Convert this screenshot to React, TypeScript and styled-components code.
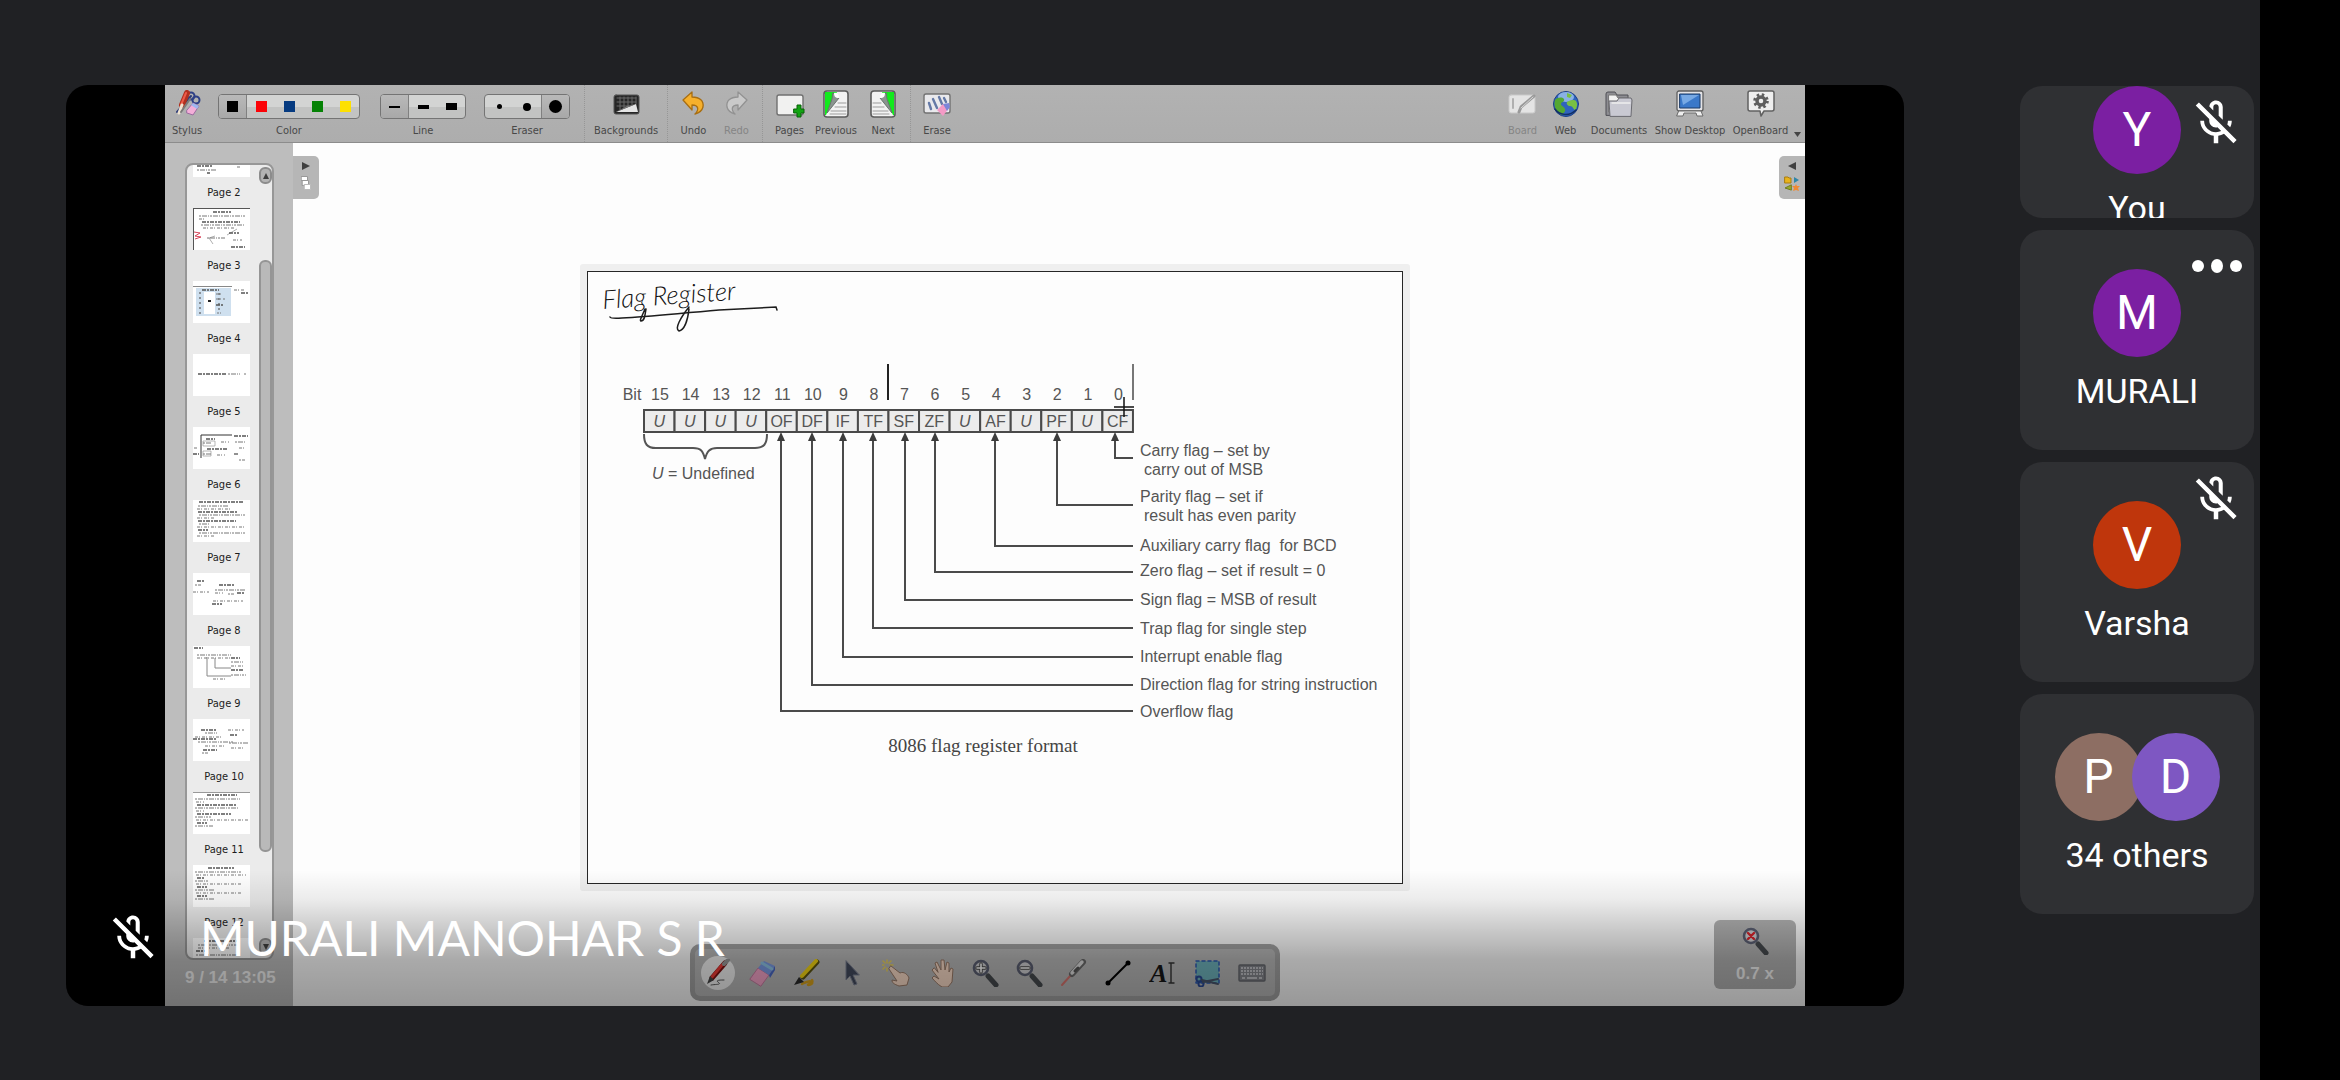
import React from "react";
import styled, { createGlobalStyle, css } from "styled-components";

const GlobalStyle = createGlobalStyle`
  * { box-sizing: border-box; }
  body { margin: 0; background: #202124; font-family: Roboto, "Liberation Sans", sans-serif; }
  button { margin: 0; padding: 0; border: 0; background: none; color: inherit; font: inherit; }
  svg { display: block; }
`;

/* ---------- call layout ---------- */

const Call = styled.div`
  display: flex;
  height: 100vh;
  min-height: 720px;
  background: #202124;
`;

const CallBody = styled.main`
  flex: 1;
  min-width: 0;
  display: flex;
  gap: 116px;
  padding: 85px 6px 74px 66px;
`;

const CutoutStrip = styled.div`
  width: 80px;
  background: #000;
`;

const Stage = styled.section`
  position: relative;
  flex: 1;
  min-width: 0;
  display: flex;
  padding: 0 99px;
  border-radius: 22px;
  background: #000;
  overflow: hidden;
`;

const Scrim = styled.div`
  position: absolute;
  inset: auto 0 0 0;
  height: 136px;
  background: linear-gradient(
    rgba(0, 0, 0, 0),
    rgba(0, 0, 0, 0.07) 22%,
    rgba(0, 0, 0, 0.21) 45%,
    rgba(0, 0, 0, 0.33) 66%,
    rgba(0, 0, 0, 0.4)
  );
  pointer-events: none;
`;

const Presenter = styled.div`
  position: absolute;
  left: 40px;
  bottom: 38px;
  display: flex;
  align-items: center;
  gap: 40px;
  color: #fff;
  font-family: Lato, Roboto, sans-serif;
  font-size: 48px;
  line-height: 60px;
  white-space: nowrap;
`;

/* ---------- participants ---------- */

const Participants = styled.ul`
  width: 234px;
  margin: 0;
  padding: 1px 0 0;
  list-style: none;
  display: flex;
  flex-direction: column;
  gap: 12px;
`;

const Tile = styled.li<{ $cut?: boolean }>`
  position: relative;
  display: flex;
  flex-direction: column;
  align-items: center;
  gap: 14px;
  flex: none;
  height: ${(p) => (p.$cut ? 132 : 220)}px;
  padding-top: ${(p) => (p.$cut ? 0 : 39)}px;
  border-radius: 22px;
  background: #2f3033;
  overflow: hidden;
`;

const Avatars = styled.div`
  display: flex;
`;

const Avatar = styled.div<{ $color: string }>`
  flex: none;
  display: flex;
  align-items: center;
  justify-content: center;
  width: 88px;
  height: 88px;
  border-radius: 50%;
  background: ${(p) => p.$color};
  color: #fff;
  font-size: 48px;
  line-height: 56px;
  & + & {
    margin-left: -11px;
  }
`;

const TileName = styled.span`
  flex: none;
  color: #fff;
  font-size: 34px;
  line-height: 40px;
`;

const TileAction = styled.button`
  position: absolute;
  top: 10px;
  right: 11px;
`;

/* ---------- shared board ---------- */

const Board = styled.div`
  position: relative;
  flex: 1;
  min-width: 0;
  display: flex;
  flex-direction: column;
  font-family: "DejaVu Sans Condensed", "DejaVu Sans", sans-serif;
  font-size: 11px;
  line-height: 14px;
  color: #484848;
`;

const Toolbar = styled.header`
  display: flex;
  height: 58px;
  padding: 4px 3px 0 0;
  background: linear-gradient(#b2b2b2, #adadad);
  border-bottom: 1px solid #8c8c8c;
`;

const Spacer = styled.div`
  flex: 1;
`;

const barItem = css`
  display: flex;
  flex-direction: column;
  align-items: center;
  gap: 5px;
  height: 49px;
  white-space: nowrap;
`;

const BarButton = styled.button<{ $w: number }>`
  ${barItem}
  width: ${(p) => p.$w}px;
  &:disabled {
    color: #858585;
  }
`;

const BarIcon = styled.span`
  display: flex;
  align-items: center;
  justify-content: center;
  height: 30px;
`;

const BarField = styled.div<{ $before: number }>`
  ${barItem}
  margin-left: ${(p) => p.$before}px;
  padding-top: 5px;
`;

const Segments = styled.div`
  display: flex;
  height: 25px;
  border: 1px solid #747474;
  border-radius: 4px;
  background: linear-gradient(#d3d4d3 50%, #c2c3c2 50%);
  overflow: hidden;
`;

const Segment = styled.button<{ $on?: boolean; $last?: boolean }>`
  display: flex;
  align-items: center;
  justify-content: center;
  width: 28px;
  ${(p) =>
    p.$on &&
    css`
      background: linear-gradient(#b9b9b9, #a8a8a8);
      border-${p.$last ? "left" : "right"}: 1px solid #808080;
    `}
`;

const Mark = styled.span<{ $w: number; $h: number; $color: string; $round?: boolean }>`
  width: ${(p) => p.$w}px;
  height: ${(p) => p.$h}px;
  background: ${(p) => p.$color};
  border-radius: ${(p) => (p.$round ? "50%" : "0")};
`;

const Divider = styled.span<{ $before?: number }>`
  margin: -4px 4px 0 ${(p) => p.$before ?? 4}px;
  border-left: 1px dotted #969696;
`;

const MenuCaret = styled.button`
  display: flex;
  align-items: flex-end;
  padding: 0 1px 5px 2px;
`;

const Workspace = styled.div`
  flex: 1;
  min-height: 0;
  display: flex;
`;

const PagePanel = styled.aside`
  display: flex;
  flex-direction: column;
  width: 128px;
  padding: 20px 19px 0 20px;
  background: #bdbdbd;
`;

const PageList = styled.div`
  flex: 1;
  min-height: 0;
  display: flex;
  border: 2px solid #979797;
  border-radius: 8px;
  background: #ebebeb;
  overflow: hidden;
`;

const PageItems = styled.ol`
  flex: 1;
  margin: 0;
  padding: 0 0 0 2px;
  list-style: none;
`;

const PageItem = styled.li`
  display: flex;
  flex-direction: column;
  align-items: center;
  color: #1c1c1c;
`;

const PageThumb = styled.button<{ $cut?: boolean }>`
  display: flex;
  align-items: flex-end;
  width: 57px;
  height: ${(p) => (p.$cut ? 12 : 42)}px;
  margin-right: 5px;
  background: #fff;
  overflow: hidden;
`;

const PageName = styled.span`
  padding: 9px 0 8px;
  line-height: 14px;
`;

const Scroller = styled.div`
  position: relative;
  display: flex;
  flex-direction: column;
  justify-content: space-between;
  width: 13px;
  padding: 2px 0 3px;
`;

const ScrollStep = styled.button`
  display: flex;
  align-items: center;
  justify-content: center;
  height: 17px;
  border: 2px solid #8c8c8c;
  border-radius: 6px;
  background: #b4b4b4;
`;

const ScrollThumb = styled.div`
  position: absolute;
  top: 12%;
  left: 0;
  right: 0;
  bottom: 13%;
  margin-bottom: 3px;
  border: 2px solid #959595;
  border-radius: 6px;
  background: #b9b9b9;
`;

const Status = styled.p`
  margin: 0;
  height: 46px;
  padding-top: 8px;
  color: #f4f4f4;
  text-align: center;
  font: bold 17px/20px "Liberation Sans", Arial, sans-serif;
  white-space: nowrap;
`;

const Canvas = styled.div`
  flex: 1;
  min-width: 0;
  display: flex;
  align-items: flex-start;
  justify-content: space-between;
  background: #fdfdfd;
`;

const DockTab = styled.button<{ $side: "left" | "right" }>`
  display: flex;
  flex-direction: column;
  align-items: center;
  gap: 6px;
  width: 26px;
  height: 43px;
  margin-top: 13px;
  padding-top: 6px;
  border-radius: ${(p) => (p.$side === "left" ? "0 5px 5px 0" : "5px 0 0 5px")};
  background: #b6b6b6;
`;

const Sheet = styled.div`
  margin: 121px 108px 0 0;
  border: 7px solid #efefef;
  border-radius: 3px;
`;

const SheetPage = styled.div`
  border: 1px solid #262626;
  background: #fdfdfd;
`;

const ToolPalette = styled.div`
  position: absolute;
  left: 50%;
  bottom: 5px;
  transform: translateX(-50%);
  display: grid;
  grid-template-columns: repeat(13, 1fr);
  width: 590px;
  height: 57px;
  padding: 0 1px;
  border: 5px solid #a3a3a3;
  border-radius: 10px;
  background: #b9b9b9;
`;

const Tool = styled.button`
  display: flex;
  align-items: center;
  justify-content: center;
`;

const ToolFace = styled.span<{ $on?: boolean }>`
  display: flex;
  align-items: center;
  justify-content: center;
  width: 34px;
  height: 34px;
  border-radius: 50%;
  background: ${(p) => (p.$on ? "#f2f2f2" : "transparent")};
`;

const ZoomBox = styled.button`
  position: absolute;
  right: 9px;
  bottom: 17px;
  display: flex;
  flex-direction: column;
  align-items: center;
  gap: 9px;
  width: 82px;
  height: 69px;
  padding-top: 7px;
  border-radius: 6px;
  background: #b2b2b2;
  color: #f4f4f4;
  font: bold 17px/20px "Liberation Sans", Arial, sans-serif;
`;

/* ---------- icons ---------- */

const MicOff = () => (
  <svg width="54" height="54" viewBox="0 0 24 24" fill="#fff" aria-hidden="true">
    <path d="M10.8 4.9c0-.66.54-1.2 1.2-1.2s1.2.54 1.2 1.2l-.01 3.91L15 10.6V5c0-1.66-1.34-3-3-3-1.54 0-2.79 1.16-2.96 2.65l1.76 1.76V4.9zM19 11h-1.7c0 .58-.1 1.13-.27 1.64l1.27 1.27c.44-.88.7-1.87.7-2.91zM4.41 2.86L3 4.27l6 6V11c0 1.66 1.34 3 3 3 .23 0 .44-.03.65-.08l1.66 1.66c-.71.33-1.5.52-2.31.52-2.76 0-5.3-2.1-5.3-5.1H5c0 3.41 2.72 6.23 6 6.72V21h2v-3.28c.91-.13 1.77-.45 2.55-.9l4.2 4.2 1.41-1.41L4.41 2.86z" />
  </svg>
);

const MoreDots = () => (
  <svg width="54" height="54" viewBox="0 0 54 54" fill="#fff" aria-hidden="true">
    <circle cx="9" cy="26" r="6" />
    <ellipse cx="28" cy="26" rx="6" ry="7" />
    <circle cx="47" cy="26" r="6" />
  </svg>
);

const Icon = ({ children, w = 28, h = 28 }: { children: React.ReactNode; w?: number; h?: number }) => (
  <svg width={w} height={h} viewBox={`0 0 ${w} ${h}`} fill="none" strokeLinecap="round" strokeLinejoin="round" aria-hidden="true">
    {children}
  </svg>
);

const StylusIcon = () => (
  <Icon>
    <path d="M4 22 18 6" stroke="#2b3a78" strokeWidth="2" />
    <circle cx="18" cy="6" r="3.5" stroke="#2d3f86" strokeWidth="2" />
    <circle cx="23" cy="10" r="3.5" stroke="#2d3f86" strokeWidth="2" />
    <path d="M9 15 14 3" stroke="#b03020" strokeWidth="6" />
    <path d="M8 15 13 3" stroke="#ee5a48" strokeWidth="2" />
    <path d="M6 23 9 15" stroke="#efe2d0" strokeWidth="3" />
    <path d="M8 22 17 9" stroke="#7b7b7b" strokeWidth="2" />
    <path d="m14 20 6-7 6 3-6 9-6-2z" fill="#f3aed8" stroke="#9a6ca0" />
    <path d="m18 15 2-2 6 3-2 3z" fill="#9db7f0" />
  </Icon>
);

const BackgroundsIcon = () => (
  <Icon>
    <rect x="2" y="5" width="25" height="19" rx="2" fill="#262626" stroke="#555" />
    <path d="M5 8h19M5 12h19M5 16h12M8 7v13M12 7v12M16 7v10M20 7v8M24 7v7" stroke="#686868" />
    <path d="M4 22 24 14l2 8z" fill="#e4e4e4" />
    <path d="m4 22 20-8-9 2z" fill="#777" />
  </Icon>
);

const UndoArrow = ({ main, edge }: { main: string; edge: string }) => (
  <path
    d="M3 10 12 2v5c8 0 12 4 11 10-1 4-4 6-8 7 4-4 4-9-3-9v5z"
    fill={main}
    stroke={edge}
    strokeWidth="1.3"
  />
);

const UndoIcon = () => (
  <Icon>
    <UndoArrow main="#f6b02c" edge="#a86e12" />
  </Icon>
);

const RedoIcon = () => (
  <Icon>
    <g transform="translate(27 0) scale(-1 1)">
      <UndoArrow main="#c9c9c9" edge="#929292" />
    </g>
  </Icon>
);

const PagesIcon = () => (
  <Icon w={30}>
    <rect x="2" y="5" width="26" height="20" rx="2" fill="#f1f1f0" stroke="#707070" strokeWidth="1.4" />
    <path d="M20 18h3v-4h4v4h3v4h-3v4h-4v-4h-3z" transform="translate(-1 1)" fill="#12a312" stroke="#086008" />
  </Icon>
);

const TurnIcon = ({ flip }: { flip?: boolean }) => (
  <Icon>
    <g transform={flip ? "translate(28 0) scale(-1 1)" : undefined}>
      <rect x="2" y="1" width="24" height="26" rx="3" fill="#f2f2f2" stroke="#5c5c5c" strokeWidth="1.6" />
      <path d="M3 2h12L4 25H3z" fill="#12ea1d" />
      <path d="M16 13h8M13 17h11M9 21h15M8 24h16" stroke="#9b9b9b" />
      <path d="M11 3c3 2 3 5 6 5L5 23 10 9z" fill="#8b9490" stroke="#6b756f" />
      <path d="M12 3c3-1 5 1 5 5-4 0-5-2-5-5z" fill="#fff" />
    </g>
  </Icon>
);

const EraseIcon = () => (
  <Icon w={30}>
    <rect x="2" y="4" width="26" height="19" rx="2" fill="#e9e9ec" stroke="#727272" strokeWidth="1.4" />
    <path d="m7 13 2 6M11 9l4 9M17 7l3 7M22 8l2 4" stroke="#6479a6" strokeWidth="2.4" />
    <path d="m15 20 6-6 6 4-6 8z" fill="#f49ac6" />
    <path d="m21 14 6-1 1 4-3 4z" fill="#7d86d8" />
  </Icon>
);

const BoardIcon = () => (
  <Icon w={30}>
    <rect x="1" y="5" width="26" height="18" rx="2" fill="#e4e4e4" stroke="#c9c9c9" />
    <path d="M5 9v9" stroke="#b0b0b0" strokeWidth="2" />
    <path d="m11 22 2-5L26 6" stroke="#9a9a9a" strokeWidth="3" />
    <path d="m13 18 12-11" stroke="#d6d6d6" />
  </Icon>
);

const WebIcon = () => (
  <Icon>
    <circle cx="14" cy="14" r="12.5" fill="#2f63bd" stroke="#1c3f85" />
    <ellipse cx="14" cy="7" rx="8" ry="5" fill="#a9cbf2" opacity=".75" />
    <path d="M3 10c3-3 7-3 9-1 1 3-3 3-3 5s3 2 4 5-2 4-3 6C5 23 1 17 3 10z" fill="#53a832" />
    <path d="M15 12c3-2 7-3 9-1 2 3 1 7-1 9-2-1-2-4-5-4-2 0-4-2-3-4zM15 3l5 2-2 3-3-1z" fill="#79c043" />
    <path d="M3 19c4 6 14 8 21 1" stroke="#123066" strokeWidth="1.5" />
  </Icon>
);

const DocumentsIcon = () => (
  <Icon w={30}>
    <path d="M2 25V4q0-2 2-2h7l2 3h11v20z" fill="#8d8d92" stroke="#4f4f55" />
    <path d="M5 5h7l2 3h9v14H5z" fill="#f2f2f2" stroke="#777" />
    <path d="M6 26 5 11h8l2-3h12l1 2-1 16z" fill="#c9c9d2" stroke="#6a6a70" />
    <path d="M8 13h18" stroke="#eee" strokeWidth="1.5" />
  </Icon>
);

const DesktopIcon = () => (
  <Icon w={30}>
    <rect x="2" y="1" width="26" height="20" rx="2" fill="#e3e3e6" stroke="#5d5d5d" strokeWidth="1.3" />
    <rect x="5" y="4" width="20" height="14" fill="#3a78c9" stroke="#1b3a66" />
    <path d="M6 5h18L8 15z" fill="#77a9e4" />
    <path d="M4 21h22l2 5h-6l-1-3H9l-1 3H2z" fill="#eee" stroke="#6b6b6b" />
  </Icon>
);

const OpenBoardIcon = () => (
  <Icon w={30}>
    <path d="M4 1h22q2 0 2 2v16q0 2-2 2h-8l-3 5-1-5H4q-2 0-2-2V3q0-2 2-2z" fill="#eeeeee" stroke="#616161" strokeWidth="1.5" />
    <circle cx="15" cy="11" r="6.3" stroke="#5e5e5e" strokeWidth="3" strokeDasharray="2.4 2.55" strokeLinecap="butt" />
    <circle cx="15" cy="11" r="4" stroke="#5e5e5e" strokeWidth="3.4" />
  </Icon>
);

const Caret = () => (
  <Icon w={7} h={5}>
    <path d="M0 0h7L3.5 5z" fill="#444" />
  </Icon>
);

const Triangle = ({ dir }: { dir: "up" | "down" | "left" | "right" }) => (
  <Icon w={8} h={8}>
    <path
      d={{ up: "M4 1 7 7H1z", down: "M4 7 7 1H1z", left: "M0 4 8 0v8z", right: "M8 4 0 0v8z" }[dir]}
      fill="#3f3f3f"
    />
  </Icon>
);

const StackIcon = () => (
  <Icon w={10} h={15}>
    <rect x=".5" y=".5" width="6" height="4" fill="#fff" stroke="#999" />
    <rect x="1.5" y="4.5" width="6" height="5" fill="#fff" stroke="#999" />
    <rect x="3.5" y="8.5" width="6" height="5" fill="#fff" stroke="#bbb" />
  </Icon>
);

const LibraryIcon = () => (
  <Icon w={16} h={15}>
    <path d="M1 1h3l1 1h2v5H1z" fill="#e8b31c" stroke="#a87c10" />
    <path d="m10 1 5 3-5 3z" fill="#2f86a8" />
    <path d="m7 9-6 3 6 2z" fill="#97a82c" stroke="#6f7d1e" />
    <path d="m12 8 1 2h3l-2 2 1 3-3-1-3 1 1-3-2-2h3z" fill="#ef8a35" />
  </Icon>
);

const Lens = () => (
  <>
    <path d="m17 17 8 9" stroke="#464a4e" strokeWidth="5" />
    <circle cx="10" cy="9" r="7" fill="#cfcfd2" stroke="#5b5f72" strokeWidth="2.6" />
  </>
);

const Magnifier = ({ plus }: { plus?: boolean }) => (
  <>
    <Lens />
    <path d={plus ? "M6 9h8M10 5v8" : "M6 9h8"} stroke="#454545" strokeWidth="3.4" />
    <path d={plus ? "M6 9h8M10 5v8" : "M6 9h8"} stroke="#fff" strokeWidth="1.6" />
  </>
);

const tools: { name: string; art: React.ReactNode }[] = [
  {
    name: "Pen",
    art: (
      <>
        <path d="M7 26c6-1 11 0 7-3-3-2 3-2 6-2" stroke="#555" />
        <path d="m8 19 13-15" stroke="#7c1010" strokeWidth="5" />
        <path d="m8 18 10-12" stroke="#ee3a35" strokeWidth="3" />
        <path d="m20 5 4-4" stroke="#999" strokeWidth="4" />
        <path d="m3 25 3-8 4 4z" fill="#444" />
      </>
    ),
  },
  {
    name: "Eraser",
    art: (
      <>
        <path d="m1 20 8-11 11 7-8 11z" fill="#f5a3c8" stroke="#c77aa0" />
        <path d="m9 9 6-7 11 5-6 9z" fill="#7b9be6" />
        <path d="m20 16 6-9v4l-5 8z" fill="#4968c6" />
        <path d="m13 4 10 6" stroke="#8fc5e6" strokeWidth="3" />
      </>
    ),
  },
  {
    name: "Highlighter",
    art: (
      <>
        <path d="M9 25c8-4 12-3 7 0-4 2 6 1 3-4" stroke="#d8a21c" strokeWidth="2.5" />
        <path d="M10 18 24 3" stroke="#5c5410" strokeWidth="5" />
        <path d="M9 17 23 2" stroke="#f5d612" strokeWidth="4" />
        <path d="m1 26 5-8 5 5z" fill="#2a2a2a" />
      </>
    ),
  },
  {
    name: "Select",
    art: <path d="M8 2v19l4-4 4 9 3-1-4-9h6z" fill="#434b5e" stroke="#7b8192" />,
  },
  {
    name: "Interact",
    art: (
      <>
        <path d="M5 1v3M5 9v3M0 6h2M8 6h3M1 2l2 2M9 2 7 4M1 10l2-2" stroke="#ecd35a" strokeWidth="1.5" />
        <path d="m9 7 9 7c4-2 8 2 9 5l-2 7-8 1c-5-2-7-3-7-6l5 1-8-12z" fill="#fbdcc8" stroke="#9b7b68" />
      </>
    ),
  },
  {
    name: "Scroll page",
    art: (
      <path
        d="m11 13-3-9 2-1 4 8V1h3l1 10 2-8 2 1v9l2-4 2 1-1 13-4 5h-6c-5-3-7-6-10-9l2-2 5 3-7-9 2-2z"
        fill="#fbdcc8"
        stroke="#9b7b68"
      />
    ),
  },
  { name: "Zoom in", art: <Magnifier plus /> },
  { name: "Zoom out", art: <Magnifier /> },
  {
    name: "Laser pointer",
    art: (
      <>
        <path d="m2 26 9-10" stroke="#d9756f" strokeWidth="2" />
        <path d="M12 15 23 3" stroke="#6a6a6a" strokeWidth="6" />
        <path d="M12 14 22 3" stroke="#dedede" strokeWidth="3.4" />
        <path d="m15 12 3-3" stroke="#555" strokeWidth="3" />
      </>
    ),
  },
  {
    name: "Draw line",
    art: (
      <>
        <path d="M4 24 24 4" stroke="#000" strokeWidth="2" />
        <circle cx="4" cy="24" r="2.5" fill="#000" />
        <circle cx="24" cy="4" r="2.5" fill="#000" />
      </>
    ),
  },
  {
    name: "Write text",
    art: (
      <>
        <text x="1" y="23" fill="#161616" fontFamily="Liberation Serif, serif" fontSize="26" fontStyle="italic" fontWeight="700">
          A
        </text>
        <path d="M20 4h5M20 24h5M22 4v20" stroke="#333" strokeWidth="1.4" />
      </>
    ),
  },
  {
    name: "Capture part of the screen",
    art: (
      <>
        <rect x="3" y="2" width="23" height="22" fill="#6fb4bd" stroke="#2d59b4" strokeWidth="1.5" strokeDasharray="3 3" />
        <circle cx="6" cy="20" r="2.5" stroke="#2a4a96" strokeWidth="2" />
        <circle cx="8" cy="25" r="2.5" stroke="#2a4a96" strokeWidth="2" />
        <path d="m9 21 16 4M10 23l15-3" stroke="#49566c" strokeWidth="2" />
      </>
    ),
  },
  {
    name: "Virtual keyboard",
    art: (
      <>
        <rect x="1" y="6" width="26" height="16" rx="1" fill="#84868c" stroke="#66686e" strokeWidth="1.4" />
        <path d="M3 9h22M3 12h22M3 15h22" stroke="#d2d3d8" strokeWidth="1.6" strokeDasharray="2 1" strokeLinecap="butt" />
        <path d="M4 19h3M9 19h10M21 19h3" stroke="#d2d3d8" strokeWidth="1.6" strokeLinecap="butt" />
      </>
    ),
  },
];

/* ---------- page thumbnails ---------- */

type Line = [x: number, y: number, w: number];

const textRows = (x: number, widths: number[], top: number, step: number): Line[] =>
  widths.map((w, i) => [x + (i % 3), top + i * step, w]);

const pages: { name: string; lines: Line[]; extra?: React.ReactNode }[] = [
  { name: "Page 2", lines: [[4, 31, 16], [4, 35, 20], [44, 32, 3], [14, 38, 3]] },
  {
    name: "Page 3",
    lines: [[20, 4, 18], [6, 8, 47], [6, 11, 6], [9, 14, 38], [8, 17, 44], [10, 20, 32], [36, 25, 10], [14, 30, 18], [40, 32, 9], [38, 39, 14]],
    extra: (
      <>
        <path d="M0 0h57M0 0v42" stroke="#555" strokeWidth="2" />
        <path d="m1 24 6 1-5 3 6 1-6 2" stroke="#d8455a" />
        <path d="m34 27 10-6M20 36l-4-6 6-2" stroke="#777" strokeWidth=".6" />
      </>
    ),
  },
  {
    name: "Page 4",
    lines: [[9, 9, 17], [23, 13, 5], [23, 18, 9], [23, 24, 8], [24, 32, 4], [41, 9, 10], [48, 12, 7]],
    extra: (
      <>
        <rect x="3" y="7" width="35" height="28" fill="#cfe0ef" />
        <rect x="11" y="11" width="11" height="22" fill="#fff" />
        <path d="M0 5.5h39" stroke="#888" />
        <path d="M7 11v22M26 12v20" stroke="#8a9096" strokeWidth="2" strokeDasharray="2 3" />
        <path d="M15 20h3" stroke="#222" strokeWidth="2" />
      </>
    ),
  },
  { name: "Page 5", lines: [[5, 20, 28], [35, 20, 12], [51, 20, 2]] },
  {
    name: "Page 6",
    lines: [[13, 12, 9], [10, 16, 9], [28, 15, 8], [14, 22, 20], [10, 27, 8], [24, 28, 8], [41, 9, 14], [42, 15, 10], [46, 21, 7], [41, 27, 4], [46, 33, 6], [1, 21, 4], [0, 27, 6]],
    extra: (
      <>
        <path d="M8 31V8h31" stroke="#333" />
        <path d="M10 14h12v5H10zM10 24h8v5h-8z" stroke="#999" strokeWidth=".7" />
      </>
    ),
  },
  {
    name: "Page 7",
    lines: [[6, 2, 44], [5, 6, 30], ...textRows(4, [34, 40, 46, 18, 38, 10, 49, 10, 46, 18], 9, 3)],
  },
  {
    name: "Page 8",
    lines: [[4, 8, 8], [2, 12, 6], [0, 19, 16], [26, 12, 16], [22, 17, 30], [22, 20, 8], [44, 20, 8], [35, 21, 6], [20, 28, 30], [19, 31, 10]],
  },
  {
    name: "Page 9",
    lines: [[1, 2, 9], [4, 9, 34], [4, 12, 34], [38, 12, 9], [38, 16, 12], [38, 20, 14], [38, 24, 12], [38, 29, 15], [20, 33, 14]],
    extra: <path d="M14 11v19h24M22 12v10h16" stroke="#888" />,
  },
  {
    name: "Page 10",
    lines: [[8, 11, 16], [12, 14, 12], [2, 18, 28], [0, 20, 24], [5, 23, 36], [12, 27, 20], [10, 31, 14], [9, 34, 6], [35, 11, 16], [37, 16, 8], [36, 24, 20], [38, 29, 14]],
  },
  {
    name: "Page 11",
    lines: [[14, 3, 30], ...textRows(2, [45, 8, 40, 44, 8, 34, 16, 52, 10, 18], 7, 3)],
    extra: <path d="M0 .5h57" stroke="#999" />,
  },
  {
    name: "Page 12",
    lines: [[15, 3, 26], ...textRows(2, [47, 50, 8, 14, 45, 10, 20, 46, 10, 20], 7, 3)],
  },
];

const nextPage: { name: string; lines: Line[] } = {
  name: "Page 13",
  lines: [[11, 3, 34], [5, 7, 40], [5, 10, 32], [3, 13, 10], [3, 17, 44]],
};

const ThumbArt = ({ lines, extra }: { lines: Line[]; extra?: React.ReactNode }) => (
  <svg width="57" height="42" viewBox="0 0 57 42" fill="none" aria-hidden="true">
    {extra}
    {lines.map(([x, y, w], i) => (
      <path
        key={i}
        d={`M${x} ${y}h${w}`}
        stroke={i % 3 === 0 ? "#555" : "#777"}
        strokeWidth={i % 3 === 0 ? 1.3 : 1}
        strokeDasharray={["4 1 2 1", "2 1 5 1 1 1", "3 1 1 2"][i % 3]}
      />
    ))}
  </svg>
);

/* ---------- flag register diagram ---------- */

const CELL = 30.56;
const LEFT = 56;
const flags = ["U", "U", "U", "U", "OF", "DF", "IF", "TF", "SF", "ZF", "U", "AF", "U", "PF", "U", "CF"];
const leads: { x: number; y: number; text: [string, number][] }[] = [
  { x: 527, y: 186, text: [["Carry flag – set by", 184], ["carry out of MSB", 203]] },
  { x: 469, y: 233, text: [["Parity flag – set if", 230], ["result has even parity", 249]] },
  { x: 407, y: 274, text: [["Auxiliary carry flag  for BCD", 279]] },
  { x: 347, y: 300, text: [["Zero flag – set if result = 0", 304]] },
  { x: 317, y: 328, text: [["Sign flag = MSB of result", 333]] },
  { x: 285, y: 356, text: [["Trap flag for single step", 362]] },
  { x: 255, y: 385, text: [["Interrupt enable flag", 390]] },
  { x: 224, y: 413, text: [["Direction flag for string instruction", 418]] },
  { x: 193, y: 439, text: [["Overflow flag", 445]] },
];

const FlagRegister = () => (
  <svg width="814" height="611" viewBox="0 0 814 611" fill="none" fontFamily="Liberation Sans, Arial, sans-serif" fontSize="16">
    <g stroke="#1d1d1d" strokeWidth="1.5" strokeLinecap="round">
      <path d="M22 45q1 2 12 1c26-1 50-4 97-8 20-1 40-2 57-3l1 3" />
      <path d="M57 37c-2 5-6 12-4 12 4 0 4-7 5-12M101 35c-8 10-15 22-10 24 6-1 9-13 10-22" />
    </g>
    <text x="15" y="37" fontFamily="Lato, sans-serif" fontSize="26" fontStyle="italic" fontWeight="300" fill="#111" transform="rotate(-4 15 37)">
      Flag  Register
    </text>

    <g fill="#555" textAnchor="middle">
      <text x="44" y="128">Bit</text>
      {flags.map((_, i) => (
        <text key={i} x={72 + i * CELL} y="128">
          {15 - i}
        </text>
      ))}
    </g>
    <path d="M300 92v36" stroke="#222" strokeWidth="2" />
    <path d="M545 92v36" stroke="#777" strokeWidth="2" />

    {flags.map((flag, i) => (
      <g key={i}>
        <rect x={LEFT + i * CELL} y="138" width={CELL} height="22" fill="#ececec" stroke="#4a4a4a" strokeWidth="2" />
        <text x={LEFT + (i + 0.5) * CELL} y="155" textAnchor="middle" fill="#555" fontStyle={flag === "U" ? "italic" : "normal"}>
          {flag}
        </text>
      </g>
    ))}

    <path d="M56 162c0 10 3 14 12 14h37c8 0 10 3 12 11 2-8 5-11 12-11h38c9 0 12-4 12-14" stroke="#555" strokeWidth="2" />
    <text x="64" y="207" fill="#555">
      <tspan fontStyle="italic">U</tspan> = Undefined
    </text>

    {leads.map(({ x, y, text }) => (
      <g key={x}>
        <path d={`M${x} 164V${y}H545`} stroke="#4a4a4a" strokeWidth="2" />
        <path d={`M${x} 160l-4 9h8z`} fill="#3c3c3c" />
        {text.map(([line, base], i) => (
          <text key={base} x={i ? 556 : 552} y={base} fill="#555" style={{ whiteSpace: "pre" }}>
            {line}
          </text>
        ))}
      </g>
    ))}

    <text x="395" y="480" textAnchor="middle" fontFamily="Liberation Serif, Times New Roman, serif" fontSize="19" fill="#444">
      8086 flag register format
    </text>
    <path d="M526 135h20M536 125v20" stroke="#111" strokeWidth="1.5" />
  </svg>
);

/* ---------- screen ---------- */

const BarAction = ({ label, w, off, children }: { label: string; w: number; off?: boolean; children: React.ReactNode }) => (
  <BarButton type="button" $w={w} disabled={off}>
    <BarIcon>{children}</BarIcon>
    {label}
  </BarButton>
);

const swatches = [
  ["Black", "#000"],
  ["Red", "#fb0207"],
  ["Blue", "#053a80"],
  ["Green", "#058205"],
  ["Yellow", "#fde002"],
];

const BoardToolbar = () => (
  <Toolbar>
    <BarAction label="Stylus" w={44}><StylusIcon /></BarAction>
    <BarField $before={9}>
      <Segments>
        {swatches.map(([name, color], i) => (
          <Segment key={name} type="button" aria-label={name} $on={i === 0}>
            <Mark $w={11} $h={11} $color={color} />
          </Segment>
        ))}
      </Segments>
      Color
    </BarField>
    <BarField $before={20}>
      <Segments>
        {[2, 4, 7].map((h, i) => (
          <Segment key={h} type="button" aria-label={`Line ${i + 1}`} $on={i === 0}>
            <Mark $w={11} $h={h} $color="#000" />
          </Segment>
        ))}
      </Segments>
      Line
    </BarField>
    <BarField $before={18}>
      <Segments>
        {[5, 8, 13].map((d, i) => (
          <Segment key={d} type="button" aria-label={`Eraser ${i + 1}`} $on={i === 2} $last>
            <Mark $w={d} $h={d} $color="#000" $round />
          </Segment>
        ))}
      </Segments>
      Eraser
    </BarField>
    <Divider $before={14} />
    <BarAction label="Backgrounds" w={74}><BackgroundsIcon /></BarAction>
    <Divider />
    <BarAction label="Undo" w={43}><UndoIcon /></BarAction>
    <BarAction label="Redo" w={43} off><RedoIcon /></BarAction>
    <Divider />
    <BarAction label="Pages" w={45}><PagesIcon /></BarAction>
    <BarAction label="Previous" w={48}><TurnIcon /></BarAction>
    <BarAction label="Next" w={46}><TurnIcon flip /></BarAction>
    <Divider />
    <BarAction label="Erase" w={44}><EraseIcon /></BarAction>
    <Spacer />
    <BarAction label="Board" w={43} off><BoardIcon /></BarAction>
    <BarAction label="Web" w={43}><WebIcon /></BarAction>
    <BarAction label="Documents" w={64}><DocumentsIcon /></BarAction>
    <BarAction label="Show Desktop" w={78}><DesktopIcon /></BarAction>
    <BarAction label="OpenBoard" w={63}><OpenBoardIcon /></BarAction>
    <MenuCaret type="button" aria-label="OpenBoard menu"><Caret /></MenuCaret>
  </Toolbar>
);

const PageNavigator = () => (
  <PagePanel>
    <PageList>
      <PageItems>
        {pages.map((page, i) => (
          <PageItem key={page.name}>
            <PageThumb type="button" aria-label={`Open ${page.name}`} $cut={i === 0}>
              <ThumbArt lines={page.lines} extra={page.extra} />
            </PageThumb>
            <PageName>{page.name}</PageName>
          </PageItem>
        ))}
        <PageItem>
          <PageThumb type="button" aria-label={`Open ${nextPage.name}`}>
            <ThumbArt lines={nextPage.lines} />
          </PageThumb>
        </PageItem>
      </PageItems>
      <Scroller>
        <ScrollStep type="button" aria-label="Scroll up"><Triangle dir="up" /></ScrollStep>
        <ScrollThumb />
        <ScrollStep type="button" aria-label="Scroll down"><Triangle dir="down" /></ScrollStep>
      </Scroller>
    </PageList>
    <Status>9 / 14 13:05</Status>
  </PagePanel>
);

export default function App() {
  return (
    <Call>
      <GlobalStyle />
      <CallBody>
        <Stage>
          <Board>
            <BoardToolbar />
            <Workspace>
              <PageNavigator />
              <Canvas>
                <DockTab type="button" $side="left" aria-label="Pages panel">
                  <Triangle dir="right" />
                  <StackIcon />
                </DockTab>
                <Sheet>
                  <SheetPage><FlagRegister /></SheetPage>
                </Sheet>
                <DockTab type="button" $side="right" aria-label="Library panel">
                  <Triangle dir="left" />
                  <LibraryIcon />
                </DockTab>
              </Canvas>
            </Workspace>
            <ToolPalette>
              {tools.map((tool, i) => (
                <Tool key={tool.name} type="button" aria-label={tool.name}>
                  <ToolFace $on={i === 0}><Icon>{tool.art}</Icon></ToolFace>
                </Tool>
              ))}
            </ToolPalette>
            <ZoomBox type="button">
              <Icon>
                <Lens />
                <path d="m7 6 6 6M13 6l-6 6" stroke="#d9222a" strokeWidth="2.4" />
              </Icon>
              0.7 x
            </ZoomBox>
          </Board>
          <Scrim />
          <Presenter>
            <MicOff />
            MURALI MANOHAR S R
          </Presenter>
        </Stage>
        <Participants>
          <Tile $cut>
            <Avatar $color="#7b1fa2">Y</Avatar>
            <TileName>You</TileName>
            <TileAction type="button" aria-label="Muted"><MicOff /></TileAction>
          </Tile>
          <Tile>
            <Avatar $color="#7b1fa2">M</Avatar>
            <TileName>MURALI</TileName>
            <TileAction type="button" aria-label="More options"><MoreDots /></TileAction>
          </Tile>
          <Tile>
            <Avatar $color="#bf360c">V</Avatar>
            <TileName>Varsha</TileName>
            <TileAction type="button" aria-label="Muted"><MicOff /></TileAction>
          </Tile>
          <Tile>
            <Avatars>
              <Avatar $color="#8d6e63">P</Avatar>
              <Avatar $color="#7e57c2">D</Avatar>
            </Avatars>
            <TileName>34 others</TileName>
          </Tile>
        </Participants>
      </CallBody>
      <CutoutStrip />
    </Call>
  );
}
